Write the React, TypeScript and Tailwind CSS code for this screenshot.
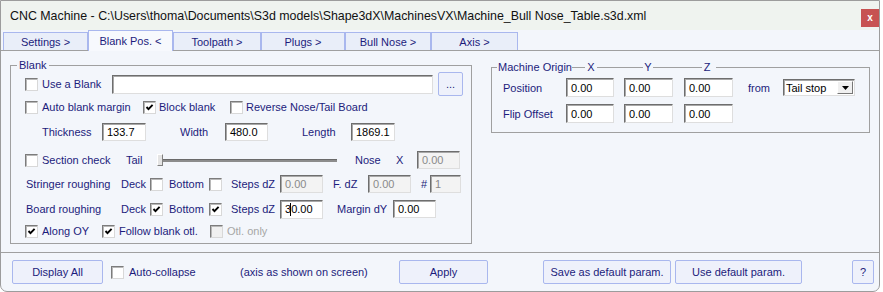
import React from 'react';

const navy = 'text-[#1c1c7c]';

const Check: React.FC<{ checked?: boolean; disabled?: boolean }> = ({ checked, disabled }) => (
  <span
    className={`relative block w-[13px] h-[13px] shrink-0 border border-t-[#7c7c7c] border-l-[#7c7c7c] border-r-[#d8d8d8] border-b-[#d8d8d8] shadow-[inset_1px_1px_0_#b8b8b8] ${disabled ? 'bg-[#f0f0f0]' : 'bg-white'}`}
  >
    {checked && (
      <svg className="absolute left-0 top-0" width="11" height="11" viewBox="0 0 11 11">
        <path d="M2.5 5 L4.5 7.2 L8.6 2.8" stroke="#000" strokeWidth="1.9" fill="none" />
      </svg>
    )}
  </span>
);

const Field: React.FC<{ className: string; value?: string; disabled?: boolean }> = ({ className, value, disabled }) => (
  <div
    className={`flex items-center shrink-0 pl-[4px] text-[11px] border border-t-[#6e6e6e] border-l-[#6e6e6e] border-r-[#dedede] border-b-[#dedede] shadow-[inset_1px_1px_0_#a8a8a8] ${disabled ? 'bg-[#f3f3f3] text-[#8a8a8a]' : 'bg-white text-black'} ${className}`}
  >
    {value}
  </div>
);

const Btn: React.FC<{ className: string; children: React.ReactNode }> = ({ className, children }) => (
  <div
    className={`flex items-center justify-center shrink-0 h-[24px] rounded-[2px] border border-[#a9b7ee] bg-[#eef1fb] ${navy} ${className}`}
  >
    {children}
  </div>
);

const tabs = [
  { label: 'Settings >', w: 'w-[85px]' },
  { label: 'Blank Pos. <', w: 'w-[85px]', active: true },
  { label: 'Toolpath >', w: 'w-[88px]' },
  { label: 'Plugs >', w: 'w-[84px]' },
  { label: 'Bull Nose >', w: 'w-[86px]' },
  { label: 'Axis >', w: 'w-[87px]' },
];

const Line: React.FC<{ className: string }> = ({ className }) => <div className={`h-px bg-[#a0a0a0] ${className}`} />;

export default function App() {
  return (
    <div className="w-[883px] h-[292px] bg-white font-['Liberation_Sans',Arial,sans-serif] text-[11px] leading-[14px]">
      <div className="w-[880px] h-[292px] flex flex-col border border-[#9c9c9c] rounded-b-[7px] bg-[#f3f6fb] overflow-hidden">
        {/* title bar */}
        <div className="h-[29px] shrink-0 flex items-start justify-between bg-[#eff3ef]">
          <div className="pl-[9px] pt-[7px] text-[12.4px] leading-[16px] text-[#111]">
            CNC Machine - C:\Users\thoma\Documents\S3d models\Shape3dX\MachinesVX\Machine_Bull Nose_Table.s3d.xml
          </div>
          <div className="mt-[8px] w-[18px] h-[18px] bg-[#c75252] text-white font-bold text-[10px] flex items-center justify-center">
            x
          </div>
        </div>

        {/* tabs */}
        <div className="h-[21px] shrink-0 flex items-end border-b border-[#a0a0a0] pl-[2px]">
          {tabs.map(t =>
            t.active ? (
              <div
                key={t.label}
                className={`${t.w} h-[21px] -mb-px relative z-10 flex items-center justify-center bg-[#f7f9fd] border border-b-0 border-[#a9b7ee] ${navy}`}
              >
                {t.label}
              </div>
            ) : (
              <div
                key={t.label}
                className={`${t.w} h-[18px] flex items-center justify-center bg-[#e9eef9] border border-b-0 border-l-[#a9b7ee] border-t-[#a9b7ee] border-r-[#a9b7ee] ${navy}`}
              >
                {t.label}
              </div>
            )
          )}
        </div>

        {/* panel */}
        <div className="h-[202px] shrink-0 flex items-start border-b border-[#a0a0a0] pl-[9px] pt-[7px]">
          {/* Blank group */}
          <fieldset className="w-[462px] h-[186px] border border-[#a0a0a0] flex flex-col">
            <legend className={`ml-[6px] px-[2px] leading-[14px] ${navy}`}>Blank</legend>

            <div className="h-[24px] flex items-center pl-[14px]">
              <Check />
              <span className={`ml-[4px] w-[70px] ${navy}`}>Use a Blank</span>
              <Field className="w-[321px] h-[19px] bg-[#f6f6f6]" />
              <Btn className="ml-[5px] w-[25px] h-[24px]">...</Btn>
            </div>

            <div className="mt-[1px] h-[20px] flex items-center pl-[14px]">
              <Check />
              <span className={`ml-[4px] w-[101px] ${navy}`}>Auto blank margin</span>
              <Check checked />
              <span className={`ml-[3px] w-[71px] ${navy}`}>Block blank</span>
              <Check />
              <span className={`ml-[3px] ${navy}`}>Reverse Nose/Tail Board</span>
            </div>

            <div className="mt-[5px] h-[20px] flex items-center pl-[31px]">
              <span className={`w-[60px] ${navy}`}>Thickness</span>
              <Field className="w-[44px] h-[18px]" value="133.7" />
              <span className={`ml-[34px] w-[45px] ${navy}`}>Width</span>
              <Field className="w-[43px] h-[18px]" value="480.0" />
              <span className={`ml-[34px] w-[49px] ${navy}`}>Length</span>
              <Field className="w-[44px] h-[18px]" value="1869.1" />
            </div>

            <div className="mt-[8px] h-[20px] flex items-center pl-[14px]">
              <Check />
              <span className={`ml-[4px] w-[84px] ${navy}`}>Section check</span>
              <span className={`w-[31px] ${navy}`}>Tail</span>
              <div className="w-[180px] flex items-center">
                <div className="w-[6px] h-[12px] bg-[#e4e4e4] border border-t-white border-l-white border-r-[#808080] border-b-[#808080]" />
                <div className="flex-1 h-[3px] bg-[#8c8c8c] border-t border-[#6a6a6a]" />
              </div>
              <span className={`ml-[18px] w-[41px] ${navy}`}>Nose</span>
              <span className={`w-[21px] ${navy}`}>X</span>
              <Field className="w-[43px] h-[18px]" value="0.00" disabled />
            </div>

            <div className="mt-[4px] h-[20px] flex items-center pl-[15px]">
              <span className={`w-[95px] ${navy}`}>Stringer roughing</span>
              <span className={`w-[29px] ${navy}`}>Deck</span>
              <Check />
              <span className={`ml-[6px] w-[40px] ${navy}`}>Bottom</span>
              <Check />
              <span className={`ml-[9px] w-[49px] ${navy}`}>Steps dZ</span>
              <Field className="w-[43px] h-[18px]" value="0.00" disabled />
              <span className={`ml-[10px] w-[35px] ${navy}`}>F. dZ</span>
              <Field className="w-[43px] h-[18px]" value="0.00" disabled />
              <span className={`ml-[10px] w-[9px] ${navy}`}>#</span>
              <Field className="w-[31px] h-[18px]" value="1" disabled />
            </div>

            <div className="mt-[5px] h-[20px] flex items-center pl-[15px]">
              <span className={`w-[95px] ${navy}`}>Board roughing</span>
              <span className={`w-[29px] ${navy}`}>Deck</span>
              <Check checked />
              <span className={`ml-[6px] w-[40px] ${navy}`}>Bottom</span>
              <Check checked />
              <span className={`ml-[9px] w-[49px] ${navy}`}>Steps dZ</span>
              <div className="w-[43px] h-[19px] shrink-0 flex items-center pl-[4px] bg-white text-black border border-t-[#6e6e6e] border-l-[#6e6e6e] border-r-[#dedede] border-b-[#dedede] shadow-[inset_1px_1px_0_#a8a8a8]">
                <span>3</span>
                <span className="w-px h-[13px] bg-black -ml-[1px]" />
                <span>0.00</span>
              </div>
              <span className={`ml-[14px] w-[56px] ${navy}`}>Margin dY</span>
              <Field className="w-[43px] h-[18px]" value="0.00" />
            </div>

            <div className="mt-[2px] h-[20px] flex items-center pl-[14px]">
              <Check checked />
              <span className={`ml-[4px] w-[60px] ${navy}`}>Along OY</span>
              <Check checked />
              <span className={`ml-[4px] w-[91px] ${navy}`}>Follow blank otl.</span>
              <Check disabled />
              <span className="ml-[4px] text-[#a6a6a6]">Otl. only</span>
            </div>
          </fieldset>

          {/* Machine origin group */}
          <fieldset className="ml-[19px] mt-[2px] w-[379px] h-[73px] border border-[#a0a0a0] flex flex-col">
            <legend className={`ml-[5px] w-[372px] h-[14px] flex items-center whitespace-nowrap ${navy}`}>
              <span className="w-[75px] pl-[1px]">Machine Origin</span>
              <Line className="w-[13px]" />
              <span className="w-[12px] text-center">X</span>
              <Line className="w-[46px]" />
              <span className="w-[10px] text-center">Y</span>
              <Line className="w-[49px]" />
              <span className="w-[10px] text-center">Z</span>
              <Line className="flex-1 ml-[4px]" />
            </legend>

            <div className="mt-[4px] h-[19px] flex items-center pl-[11px]">
              <span className={`w-[63px] ${navy}`}>Position</span>
              <Field className="w-[48px] h-[19px]" value="0.00" />
              <Field className="ml-[10px] w-[49px] h-[19px]" value="0.00" />
              <Field className="ml-[11px] w-[49px] h-[19px]" value="0.00" />
              <span className={`ml-[15px] w-[35px] ${navy}`}>from</span>
              <div className="w-[72px] h-[17px] flex items-center bg-white border border-t-[#6e6e6e] border-l-[#6e6e6e] border-r-[#dedede] border-b-[#dedede] shadow-[inset_1px_1px_0_#a8a8a8]">
                <span className="flex-1 pl-[2px] text-black">Tail stop</span>
                <div className="w-[16px] h-[13px] mr-px flex items-center justify-center bg-[#f0f0f0] border border-t-white border-l-white border-r-[#777] border-b-[#777]">
                  <svg width="7" height="4" viewBox="0 0 7 4">
                    <path d="M0 0 H7 L3.5 4 Z" fill="#000" />
                  </svg>
                </div>
              </div>
            </div>

            <div className="mt-[7px] h-[19px] flex items-center pl-[11px]">
              <span className={`w-[63px] ${navy}`}>Flip Offset</span>
              <Field className="w-[48px] h-[19px]" value="0.00" />
              <Field className="ml-[10px] w-[49px] h-[19px]" value="0.00" />
              <Field className="ml-[11px] w-[49px] h-[19px]" value="0.00" />
            </div>
          </fieldset>
        </div>

        {/* bottom bar */}
        <div className="flex-1 flex items-start pt-[7px] pl-[11px]">
          <Btn className="w-[91px]">Display All</Btn>
          <div className="ml-[8px] h-[24px] flex items-center">
            <Check />
          </div>
          <span className={`ml-[5px] w-[111px] h-[24px] flex items-center ${navy}`}>Auto-collapse</span>
          <span className={`w-[159px] h-[24px] flex items-center ${navy}`}>(axis as shown on screen)</span>
          <Btn className="w-[89px]">Apply</Btn>
          <Btn className="ml-[55px] w-[128px]">Save as default param.</Btn>
          <Btn className="ml-[4px] w-[127px]">Use default param.</Btn>
          <Btn className="ml-[50px] w-[22px]">?</Btn>
        </div>
      </div>
    </div>
  );
}
